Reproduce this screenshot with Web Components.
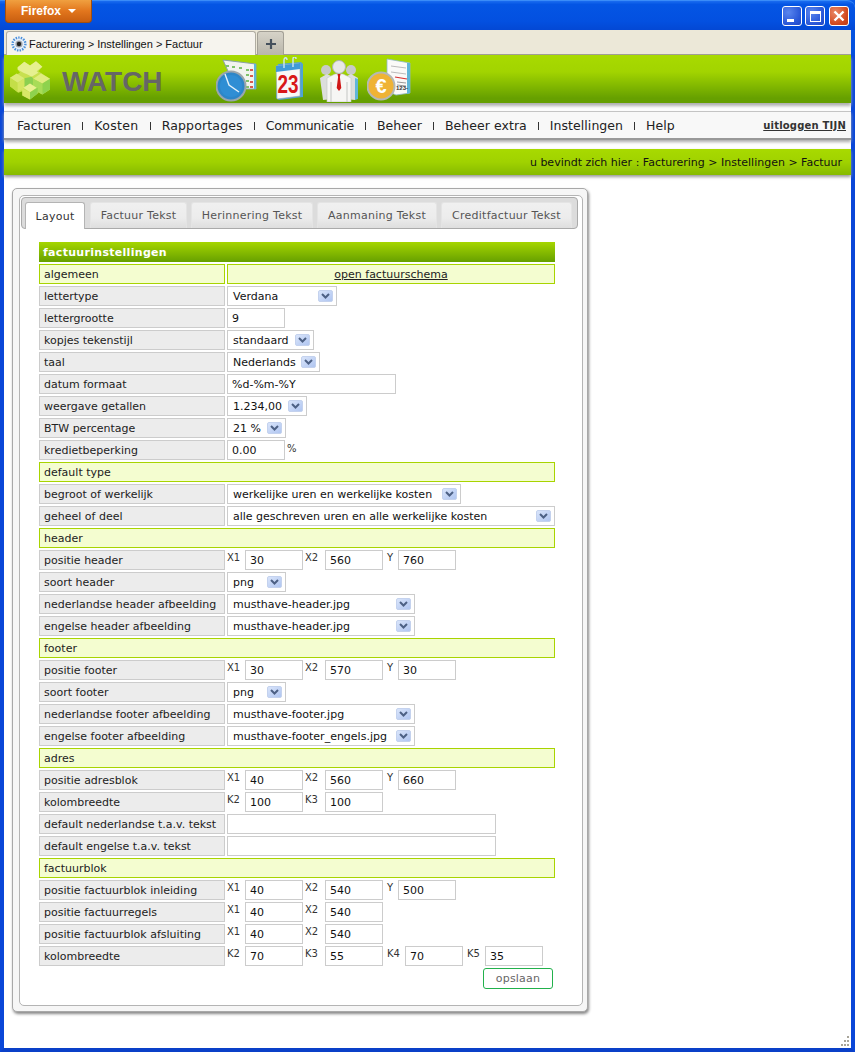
<!DOCTYPE html>
<html lang="en">
<head>
<meta charset="UTF-8">
<title>Facturering > Instellingen > Factuur</title>
<style>
  html, body { margin: 0; height: 100%; overflow: hidden; background: #fff; }
  body { font: 11px "DejaVu Sans", Verdana, sans-serif; color: #222; }
</style>
</head>
<body>

<app-window>
  <title-bar slot="top"></title-bar>
  <browser-tabs slot="top" title-text="Facturering > Instellingen > Factuur"></browser-tabs>
  <site-header></site-header>
  <main-menu></main-menu>
  <crumb-bar>u bevindt zich hier : Facturering &gt; Instellingen &gt; Factuur</crumb-bar>
  <settings-panel>
    <panel-tab slot="tabs" active>Layout</panel-tab>
    <panel-tab slot="tabs" style="width:97px;margin-left:1px">Factuur Tekst</panel-tab>
    <panel-tab slot="tabs" style="width:122px">Herinnering Tekst</panel-tab>
    <panel-tab slot="tabs" style="width:120px">Aanmaning Tekst</panel-tab>
    <panel-tab slot="tabs" style="width:131px">Creditfactuur Tekst</panel-tab>

    <form-title>factuurinstellingen</form-title>

    <section-row label="algemeen" split><a href="#" style="color:#222">open factuurschema</a></section-row>
    <form-row label="lettertype"><form-select width="110">Verdana</form-select></form-row>
    <form-row label="lettergrootte"><form-input>9</form-input></form-row>
    <form-row label="kopjes tekenstijl"><form-select width="87">standaard</form-select></form-row>
    <form-row label="taal"><form-select width="93">Nederlands</form-select></form-row>
    <form-row label="datum formaat"><form-input width="169">%d-%m-%Y</form-input></form-row>
    <form-row label="weergave getallen"><form-select width="80">1.234,00</form-select></form-row>
    <form-row label="BTW percentage"><form-select width="59">21 %</form-select></form-row>
    <form-row label="kredietbeperking"><form-input>0.00</form-input><small-mark>%</small-mark></form-row>

    <section-row label="default type"></section-row>
    <form-row label="begroot of werkelijk"><form-select width="234">werkelijke uren en werkelijke kosten</form-select></form-row>
    <form-row label="geheel of deel"><form-select width="328">alle geschreven uren en alle werkelijke kosten</form-select></form-row>

    <section-row label="header"></section-row>
    <form-row label="positie header">
      <coord-field label="X1">30</coord-field><coord-field label="X2">560</coord-field><coord-field label="Y" short>760</coord-field>
    </form-row>
    <form-row label="soort header"><form-select width="59">png</form-select></form-row>
    <form-row label="nederlandse header afbeelding"><form-select width="188">musthave-header.jpg</form-select></form-row>
    <form-row label="engelse header afbeelding"><form-select width="188">musthave-header.jpg</form-select></form-row>

    <section-row label="footer"></section-row>
    <form-row label="positie footer">
      <coord-field label="X1">30</coord-field><coord-field label="X2">570</coord-field><coord-field label="Y" short>30</coord-field>
    </form-row>
    <form-row label="soort footer"><form-select width="59">png</form-select></form-row>
    <form-row label="nederlandse footer afbeelding"><form-select width="188">musthave-footer.jpg</form-select></form-row>
    <form-row label="engelse footer afbeelding"><form-select width="188">musthave-footer_engels.jpg</form-select></form-row>

    <section-row label="adres"></section-row>
    <form-row label="positie adresblok">
      <coord-field label="X1">40</coord-field><coord-field label="X2">560</coord-field><coord-field label="Y" short>660</coord-field>
    </form-row>
    <form-row label="kolombreedte">
      <coord-field label="K2">100</coord-field><coord-field label="K3">100</coord-field>
    </form-row>
    <form-row label="default nederlandse t.a.v. tekst"><form-input width="269"></form-input></form-row>
    <form-row label="default engelse t.a.v. tekst"><form-input width="269"></form-input></form-row>

    <section-row label="factuurblok"></section-row>
    <form-row label="positie factuurblok inleiding">
      <coord-field label="X1">40</coord-field><coord-field label="X2">540</coord-field><coord-field label="Y" short>500</coord-field>
    </form-row>
    <form-row label="positie factuurregels">
      <coord-field label="X1">40</coord-field><coord-field label="X2">540</coord-field>
    </form-row>
    <form-row label="positie factuurblok afsluiting">
      <coord-field label="X1">40</coord-field><coord-field label="X2">540</coord-field>
    </form-row>
    <form-row label="kolombreedte">
      <coord-field label="K2">70</coord-field><coord-field label="K3">55</coord-field><coord-field label="K4">70</coord-field><coord-field label="K5">35</coord-field>
    </form-row>

    <save-button>opslaan</save-button>
  </settings-panel>
</app-window>

<script>
  // small helper so every element below stays a few lines
  function define(name, css, html, setup) {
    customElements.define(name, class extends HTMLElement {
      constructor() {
        super();
        const root = this.attachShadow({mode: 'open'});
        root.innerHTML = '<style>' + css + '</style>' + (typeof html === 'function' ? html(this) : html);
      }
      connectedCallback() {
        if (setup) setup(this);
      }
    });
  }

  const setWidth = el => {
    if (el.hasAttribute('width')) el.style.width = el.getAttribute('width') + 'px';
  };

  define('app-window', `
    :host { display: flex; flex-direction: column; height: 1052px; box-sizing: border-box; position: relative;
      background: #fff; border: solid #0a47d8; border-width: 0 4px 4px 4px; border-bottom-color: #0a40c8; }
    .top { margin: 0 -4px; padding: 0 4px; background: linear-gradient(#0a5ae8, #0553e2 30%, #0350dd); }
    .grip { position: absolute; right: 1px; bottom: 1px; }
  `, `
    <div class="top"><slot name="top"></slot></div>
    <slot></slot>
    <svg class="grip" width="12" height="12" viewBox="0 0 12 12" fill="#a8a59a">
      <rect x="9" y="1" width="2" height="2"/><rect x="6" y="5" width="2" height="2"/><rect x="9" y="5" width="2" height="2"/>
      <rect x="3" y="9" width="2" height="2"/><rect x="6" y="9" width="2" height="2"/><rect x="9" y="9" width="2" height="2"/>
    </svg>
  `);

  define('title-bar', `
    :host { display: flex; height: 30px; margin: 0 -4px; align-items: flex-start; justify-content: space-between;
      border-top: 1px solid #3a8cf8; box-sizing: border-box;
      background: linear-gradient(#1a6cf0, #0455e4 12%, #0350e0 70%, #0348d4); border-radius: 0 8px 0 0; }
    .ff { margin: -1px 0 0 5px; width: 87px; height: 23px; box-sizing: border-box; border: 1px solid #a04f10; border-top: 0;
      border-radius: 0 0 4px 4px; background: linear-gradient(#f0a040, #e2761d 50%, #c85e10);
      display: flex; align-items: center; justify-content: center; gap: 7px;
      font: bold 12px "Liberation Sans", sans-serif; color: #fff; padding-right: 0; }
    .ff i { border: 4px solid transparent; border-top: 4px solid #fff; border-bottom: 0; }
    .btns { display: flex; gap: 3px; margin: 5px 6px 0 0; }
    .b { width: 18px; height: 18px; border: 1px solid #fff; border-radius: 3px;
      background: radial-gradient(circle at 30% 30%, #5a86ee, #2a58d8 65%, #1f46c4); display: flex; align-items: center; justify-content: center; }
    .x { background: radial-gradient(circle at 30% 30%, #ea8a68, #d2491f 65%, #bf3b12); margin-left: 1px; }
  `, `
    <div class="ff">Firefox<i></i></div>
    <div class="btns">
      <div class="b"><svg width="14" height="14"><rect x="2" y="10" width="7" height="3" fill="#fff"/></svg></div>
      <div class="b"><svg width="14" height="14"><rect x="2.5" y="2.5" width="10" height="10" fill="none" stroke="#fff"/><rect x="2" y="2" width="11" height="3" fill="#fff"/></svg></div>
      <div class="b x"><svg width="14" height="14"><path d="M2.5 2.5l9 9M11.5 2.5l-9 9" stroke="#fff" stroke-width="2.4"/></svg></div>
    </div>
  `);

  define('browser-tabs', `
    :host { display: flex; height: 25px; align-items: flex-end; background: #ece8d8; padding-left: 2px;
      box-sizing: border-box; border-bottom: 1px solid #a09e94; }
    .tab { width: 250px; height: 24px; box-sizing: border-box; background: #f6f4ee; border: 1px solid #b0ada2; border-bottom: 0;
      border-radius: 3px 3px 0 0; display: flex; align-items: center; padding: 0 0 0 4px; gap: 2px; margin-bottom: -1px;
      font: 11px "Liberation Sans", sans-serif; color: #111; white-space: nowrap; }
    .new { width: 27px; height: 24px; box-sizing: border-box; margin: 0 0 -1px 1px; background: linear-gradient(#d6d3c8, #b9b6aa);
      border: 1px solid #a3a096; border-bottom: 0; border-radius: 3px 3px 0 0; display: flex; align-items: center; justify-content: center; }
  `, el => `
    <div class="tab">
      <svg width="16" height="16" viewBox="0 0 16 16">
        <circle cx="8" cy="8" r="7.5" fill="#e8f0fa"/>
        <circle cx="8" cy="8" r="6.4" fill="none" stroke="#4c8fd8" stroke-width="2.4" stroke-dasharray="1.4 1.2"/>
        <circle cx="8" cy="8" r="3.6" fill="#a0a4aa"/><circle cx="8" cy="8" r="2.2" fill="#222"/>
      </svg>
      <span>${el.getAttribute('title-text').replace(/>/g, '&gt;')}</span>
    </div>
    <div class="new"><svg width="12" height="12"><path d="M6 1v10M1 6h10" stroke="#44505c" stroke-width="2.2"/></svg></div>
  `);

  define('site-header', `
    :host { display: flex; align-items: flex-start; height: 48px; flex: none; background: linear-gradient(#a8da00, #a2d400 35%, #66a000 90%);
      box-shadow: 0 3px 3px #b0b0b0; }
    .brand { width: 206px; margin-left: 6px; display: flex; align-items: center; height: 50px; flex: none; }
    .word { margin: 3px 0 0 12px; font: bold 28px "Liberation Sans", sans-serif; color: #666; }
    svg { display: block; flex: none; }
  `, `
    <div class="brand">
      <svg width="40" height="39" viewBox="15 15 120 116">
        <polygon points="38,33 58,17 75,28 93,15 112,32 100,45 135,68 135,100 112,115 100,108 98,112 75,130 52,118 52,105 40,110 15,90 15,65 45,50 38,40" fill="#c8e050"/>
        <polygon points="38,33 58,17 75,28 93,15 112,32 95,45 100,50 80,62 68,55 55,50 38,40" fill="#e6f090"/>
        <polygon points="58,66 80,62 85,68 85,100 75,82 58,95" fill="#8cd050"/>
        <polygon points="15,65 35,52 58,66 38,80" fill="#dcea78"/>
        <polygon points="15,65 38,80 38,108 15,90" fill="#c4de48"/>
        <polygon points="38,80 58,66 58,95 38,108" fill="#d4e660"/>
        <polygon points="85,68 108,52 135,68 112,82" fill="#e0ec80"/>
        <polygon points="85,68 112,82 112,115 85,100" fill="#a8dc58"/>
        <polygon points="112,82 135,68 135,100 112,115" fill="#8ed24e"/>
        <polygon points="55,95 75,82 95,95 75,108" fill="#e8f090"/>
        <polygon points="52,98 75,108 75,130 52,118" fill="#d8e868"/>
        <polygon points="75,108 98,95 98,112 75,130" fill="#8ed24e"/>
      </svg>
      <span class="word">WATCH</span>
    </div>
    <svg width="42" height="44" viewBox="0 0 42 44" style="margin-top:3px">
      <path d="M7 2l33 4v25H20z" fill="#f1f3ee" stroke="#8aa0a8"/><path d="M40 6v25h-2V6z" fill="#5fb6d8"/>
      <g fill="#7fc26a"><rect x="10" y="7" width="3" height="2"/><rect x="16" y="8" width="3" height="2"/><rect x="23" y="9" width="3" height="2"/><rect x="30" y="11" width="3" height="2"/><rect x="30" y="22" width="3" height="2"/></g>
      <g fill="#d85a50"><rect x="34" y="11" width="3" height="2"/><rect x="34" y="17" width="3" height="2"/><rect x="34" y="23" width="3" height="2"/><rect x="34" y="28" width="3" height="2"/></g>
      <g fill="#7fc26a"><rect x="30" y="16" width="3" height="2"/><rect x="30" y="28" width="3" height="2"/></g>
      <circle cx="15" cy="28" r="14.5" fill="#2d86c8" stroke="#9aa6ac" stroke-width="2"/>
      <circle cx="15" cy="28" r="11" fill="#2f8ed4"/><path d="M9 16l4 11 10 7" fill="none" stroke="#e4f2fa" stroke-width="1.4"/>
    </svg>
    <svg width="29" height="44" viewBox="0 0 29 44" style="margin:2px 0 0 17px">
      <path d="M3 7l23-2 2 2v33l-24 3-3-2z" fill="#4ea4d4"/>
      <path d="M1 9l24-3v33L2 42z" fill="#f8f8f6" stroke="#9aa6ac" stroke-width=".6"/>
      <path d="M1 9l24-3v6L1 15z" fill="#3f9ad8"/>
      <path d="M9 11V3c0-3 3-3 3 0M18 10V2c0-3 3-3 3 0" fill="none" stroke="#cfe6f4" stroke-width="1.4"/>
      <text x="13" y="36" text-anchor="middle" font-family="Liberation Sans" font-weight="bold" font-size="25" textLength="21" lengthAdjust="spacingAndGlyphs" fill="#d81818">23</text>
    </svg>
    <svg width="40" height="42" viewBox="0 0 40 42" style="margin:5px 0 0 15px">
      <circle cx="7" cy="10" r="5" fill="#c8cac8"/><circle cx="32" cy="10" r="5" fill="#c8cac8"/>
      <path d="M1 18l7-4 6 3v22l-10 1zM39 18l-7-4-6 3v22l10 1z" fill="#dcdedc"/>
      <path d="M39 19v20l-3 1V18zM4 40v-8" fill="#5fb6d8"/>
      <circle cx="20" cy="7" r="6.5" fill="#e8e8e6" stroke="#b0b2b0"/>
      <path d="M8 18l8-4h8l8 4v24H8z" fill="#f6f6f4" stroke="#c4c6c4" stroke-width=".6"/>
      <path d="M12 22v20M28 22v20" stroke="#c4c6c4"/>
      <path d="M18.5 14h3l-.6 3 1.4 11-2.3 3-2.3-3 1.4-11z" fill="#d01818"/>
    </svg>
    <svg width="44" height="44" viewBox="0 0 44 44" style="margin:3px 0 0 8px">
      <path d="M20 1l23 4v30l-14 2-9-4z" fill="#fafaf8" stroke="#8fb8cc" stroke-width=".8"/>
      <path d="M43 5v30l-3 1V5z" fill="#5fb6d8"/>
      <path d="M24 8l15 2M24 14l15 2" stroke="#bbb"/><path d="M28 19l12 2" stroke="#d83030" stroke-width="1.2"/>
      <path d="M30 24l9 1M30 27l9 1" stroke="#999"/>
      <text x="35" y="32" text-anchor="middle" font-family="Liberation Sans" font-weight="bold" font-size="6" fill="#333">123-</text>
      <circle cx="14" cy="28" r="13.5" fill="#efb335" stroke="#b5b8b4" stroke-width="2"/>
      <text x="14" y="35" text-anchor="middle" font-family="Liberation Sans" font-weight="bold" font-size="20" fill="#fff">€</text>
    </svg>
  `);

  define('main-menu', `
    :host { display: flex; align-items: center; height: 29px; flex: none; margin-top: 8px; box-sizing: border-box;
      background: #f8f8f8; border-top: 1px solid #c4c4c4; border-bottom: 2px solid #999; padding: 0 5px 0 13px;
      box-shadow: 0 2px 3px #aaa; font: 12.5px "DejaVu Sans", Verdana, sans-serif; letter-spacing: .05px; color: #222; }
    span { white-space: nowrap; }
    i { width: 1px; height: 8px; background: #333; margin: 2px 11px 0 11px; }
    b { margin-left: auto; font-size: 10px; letter-spacing: .2px; text-decoration: underline; color: #333; }
  `, `
    <span>Facturen</span><i></i><span style="letter-spacing:.35px">Kosten</span><i></i><span style="letter-spacing:.15px">Rapportages</span><i></i><span style="letter-spacing:-.2px">Communicatie</span><i></i>
    <span>Beheer</span><i></i><span>Beheer extra</span><i></i><span>Instellingen</span><i></i><span>Help</span>
    <b>uitloggen TIJN</b>
  `);

  define('crumb-bar', `
    :host { display: flex; justify-content: flex-end; align-items: center; height: 26px; flex: none; margin-top: 9px; padding-right: 9px;
      background: linear-gradient(#a8da00, #a0d200 50%, #86ba00); box-shadow: 0 2px 3px #999; color: #111; font-size: 11px; }
  `, `<slot></slot>`);

  define('settings-panel', `
    :host { display: block; width: 576px; height: 824px; margin: 13px 0 0 8px; box-sizing: border-box; flex: none;
      background: #f6f6f6; border: 1px solid #a8a8a8; border-radius: 5px; box-shadow: 1px 2px 3px #888; padding: 6px 4px 5px 6px; }
    .inner { height: 100%; box-sizing: border-box; background: #fff; border: 1px solid #b4b4b4; border-radius: 5px; }
    .tabs { display: flex; gap: 4px; height: 32px; box-sizing: border-box; padding: 4px 0 0 3px; background: #dcdcdc;
      border: 1px solid #aaa; border-radius: 4px; margin: 1px 4px 0 1px; }
    .body { padding: 13px 27px 0 19px; }
  `, `
    <div class="inner">
      <div class="tabs"><slot name="tabs"></slot></div>
      <div class="body"><slot></slot></div>
    </div>
  `);

  define('panel-tab', `
    :host { display: flex; align-items: center; justify-content: center; width: 60px; height: 26px; box-sizing: border-box;
      border-radius: 3px 3px 0 0; background: linear-gradient(#f0f0f0, #ececec 60%, #dedede); color: #555; font-size: 11px; letter-spacing: .25px;
      white-space: nowrap; border: solid #e4e4e4; border-width: 1px 1px 0; }
    :host([active]) { background: #fff; color: #333; border-color: #b4b4b4; height: 27px; }
  `, `<slot></slot>`);

  define('form-title', `
    :host { display: flex; align-items: center; height: 20px; padding-left: 4px; margin-bottom: 2px; box-sizing: border-box;
      background: linear-gradient(#a6d600, #66a000); color: #fff; font-weight: bold; font-size: 11px; letter-spacing: .3px; }
  `, `<slot></slot>`);

  define('section-row', `
    :host { display: flex; gap: 2px; height: 20px; margin-bottom: 2px; }
    div { box-sizing: border-box; background: #f4fdd0; border: 1px solid #a8d400; padding-left: 4px; display: flex; align-items: center; font-size: 11px; }
    .l { flex: 1; }
    :host([split]) .l { flex: none; width: 186px; }
    .v { flex: 1; justify-content: center; padding: 0; }
  `, el => `<div class="l">${el.getAttribute('label')}</div>` +
    (el.hasAttribute('split') ? '<div class="v"><slot></slot></div>' : ''));

  define('form-row', `
    :host { display: flex; gap: 2px; height: 20px; margin-bottom: 2px; }
    .l { box-sizing: border-box; width: 186px; flex: none; background: #ececec; border: 1px solid #ccc; padding-left: 4px;
      display: flex; align-items: center; font-size: 11px; white-space: nowrap; color: #222; }
    .v { display: flex; gap: 2px; flex: 1; }
    ::slotted(coord-field:nth-child(2)) { --label-w: 20px; }
    ::slotted(coord-field:nth-child(n+3)) { margin-left: 2px; }
  `, el => `<div class="l">${el.getAttribute('label')}</div><div class="v"><slot></slot></div>`);

  define('form-input', `
    :host { display: flex; align-items: center; width: 58px; height: 20px; box-sizing: border-box; background: #fff;
      border: 1px solid #ccc; padding-left: 4px; font-size: 11px; color: #111; flex: none; white-space: nowrap; }
  `, `<slot></slot>`, setWidth);

  define('form-select', `
    :host { display: flex; align-items: center; justify-content: space-between; height: 20px; box-sizing: border-box; background: #fff;
      border: 1px solid #ccc; padding: 0 3px 0 5px; font-size: 11px; color: #111; flex: none; white-space: nowrap; }
    svg { flex: none; display: block; }
  `, `<span><slot></slot></span>
    <svg width="15" height="12" viewBox="0 0 15 12">
      <defs><linearGradient id="g" x1="0" y1="0" x2="1" y2="1"><stop offset="0" stop-color="#dbe6fb"/><stop offset="1" stop-color="#aec4f0"/></linearGradient></defs>
      <rect x=".5" y=".5" width="14" height="11" rx="1.5" fill="url(#g)" stroke="#c4d2ee"/>
      <path d="M4 4l3.5 3.5L11 4" fill="none" stroke="#4d6185" stroke-width="2"/>
    </svg>`, setWidth);

  define('coord-field', `
    :host { display: flex; flex: none; }
    span { width: var(--label-w, 18px); font-size: 10px; color: #333; padding-top: 2px; white-space: nowrap; }
    :host([short]) span { width: 11px; }
  `, el => `<span>${el.getAttribute('label')}</span><form-input><slot></slot></form-input>`);

  define('small-mark', `
    :host { font-size: 10px; color: #333; padding-top: 3px; }
  `, `<slot></slot>`);

  define('save-button', `
    :host { display: flex; align-items: center; justify-content: center; width: 70px; height: 21px; box-sizing: border-box;
      margin: 0 0 0 444px; border: 1px solid #22b14c; border-radius: 3px; background: #fff; color: #666; font-size: 11px; letter-spacing: .2px; }
  `, `<slot></slot>`);
</script>
</body>
</html>
